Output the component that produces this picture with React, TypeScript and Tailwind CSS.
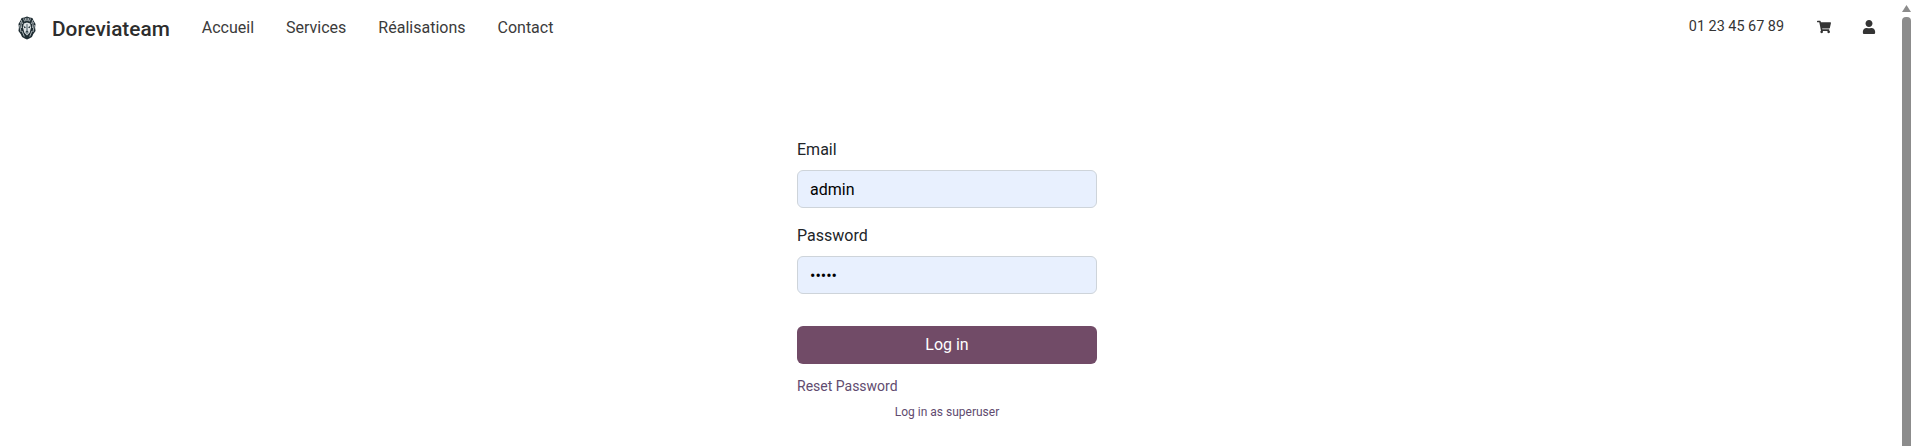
import { FaShoppingCart, FaUser } from 'react-icons/fa';

const navLinks = ['Accueil', 'Services', 'Réalisations', 'Contact'];

function LionLogo() {
  return (
    <svg viewBox="0 0 20 24" preserveAspectRatio="none" className="h-[24px] w-[18px]">
      {/* Mane */}
      <path
        d="M10 0.5 L13 1.5 L16 2 L17.5 5 L19.5 8 L19 11.5 L19.5 15 L17 18 L15.5 21 L12.5 22.5 L10 23.5 L7.5 22.5 L4.5 21 L3 18 L0.5 15 L1 11.5 L0.5 8 L2.5 5 L4 2 L7 1.5 Z"
        fill="#1f2d33"
      />
      {/* Mane strands */}
      <path
        d="M3 6 L4 12 M1.8 9 L3.4 16 M17 6 L16 12 M18.2 9 L16.6 16 M6 2.5 L7.5 5.5 M14 2.5 L12.5 5.5 M10 1.8 L10 5 M8 2 L8.8 5 M12 2 L11.2 5 M4.5 15 L7 20.5 M15.5 15 L13 20.5 M3.5 4 L5 8 M16.5 4 L15 8"
        stroke="#d5dbde"
        strokeWidth="0.8"
        fill="none"
      />
      {/* Face */}
      <path d="M10 6.5 L13.5 7.5 L14.5 11.5 L13 16.5 L10 19.5 L7 16.5 L5.5 11.5 L6.5 7.5 Z" fill="#dfe4e6" />
      {/* Eyes, nose, muzzle */}
      <path d="M6.3 10 L9 11.3 L7 12.2 Z M13.7 10 L11 11.3 L13 12.2 Z" fill="#1f2d33" />
      <path d="M9.3 8 L9.1 14.5 L8 16.2 L10 18.4 L12 16.2 L10.9 14.5 L10.7 8 Z" fill="#76858c" />
      <path d="M8.8 15 L11.2 15 L10 16.6 Z" fill="#1f2d33" />
    </svg>
  );
}

function Navbar() {
  return (
    <header className="flex h-[56px] items-center justify-between pl-[18px] pr-[37px]">
      <div className="flex items-center">
        <LionLogo />
        <span className="ml-[16px] mt-[3px] text-[20.8px] font-medium text-[#2d2d2d]">Doreviateam</span>
        <ul className="ml-[32px] flex items-center gap-[32px] text-[16px] text-[#3b3b3b]">
          {navLinks.map((link) => (
            <li key={link}>{link}</li>
          ))}
        </ul>
      </div>
      <div className="flex items-center pb-[2px] text-[#343434]">
        <span className="text-[14.4px]">01 23 45 67 89</span>
        <FaShoppingCart className="ml-[33px] text-[14px]" />
        <FaUser className="ml-[31px] text-[14px]" />
      </div>
    </header>
  );
}

function Field({ label, value, type }: { label: string; value: string; type: string }) {
  return (
    <div className="mb-[16px]">
      <label className="mb-[8px] block h-[24px] text-[16px] leading-[24px] text-[#212529]">{label}</label>
      <input
        type={type}
        defaultValue={value}
        readOnly
        className="block h-[38px] w-full rounded-[6px] border border-[#ced4da] bg-[#e8f0fe] px-[12px] text-[16px] text-black outline-none"
      />
    </div>
  );
}

function LoginForm() {
  return (
    <main className="flex justify-center pt-[82px]">
      <form className="mr-[19px] w-[300px]">
        <Field label="Email" value="admin" type="text" />
        <Field label="Password" value="admin" type="password" />
        <button
          type="button"
          className="mt-[32px] block h-[38px] w-full rounded-[6px] bg-[#714b67] text-[16px] text-white"
        >
          Log in
        </button>
        <a className="mt-[12px] block text-[14px] leading-[21px] text-[#614b6f]">Reset Password</a>
        <a className="mt-[6px] block text-center text-[12px] leading-[18px] text-[#614b6f]">Log in as superuser</a>
      </form>
    </main>
  );
}

function Scrollbar() {
  return (
    <div className="absolute right-[2px] top-0 bottom-0 w-[9px]">
      <svg viewBox="0 0 9 7" className="mt-[5px] block h-[7px] w-[9px]">
        <path d="M4.5 0 L9 7 L0 7 Z" fill="#8c8c8c" />
      </svg>
      <div className="absolute left-0 top-[17px] bottom-0 w-[9px] rounded-t-[4px] bg-[#8c8c8c]" />
    </div>
  );
}

export default function App() {
  return (
    <div
      className="relative h-[446px] overflow-hidden bg-white"
      style={{ fontFamily: 'Roboto, "Noto Sans", sans-serif' }}
    >
      <Navbar />
      <LoginForm />
      <Scrollbar />
    </div>
  );
}
